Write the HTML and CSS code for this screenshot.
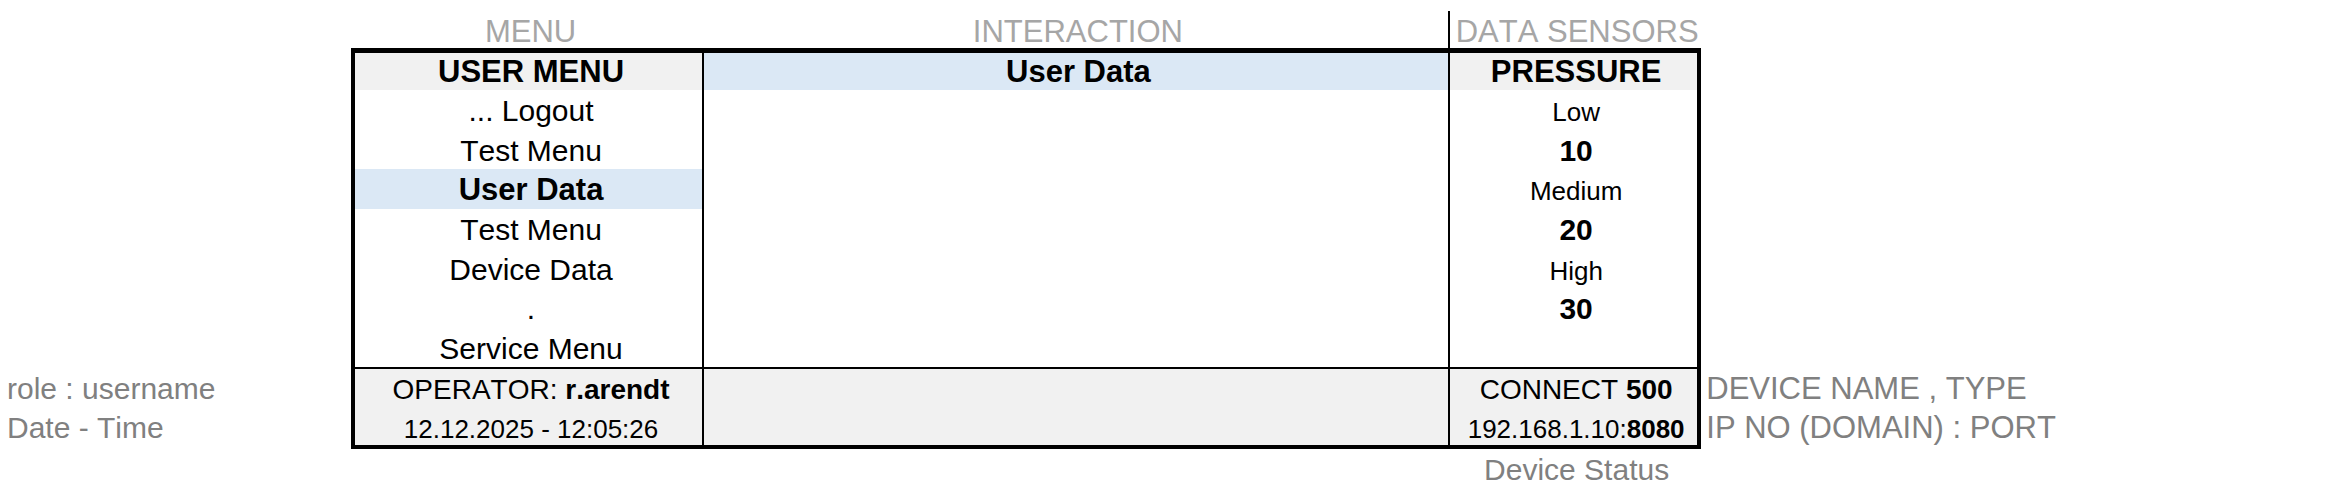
FILE: index.html
```html
<!DOCTYPE html>
<html lang="en">
<head>
<meta charset="utf-8">
<title>User Menu</title>
<link rel="stylesheet" href="styles.css">
</head>
<body>
<table class="screen">
  <colgroup>
    <col class="col-note">
    <col class="col-menu">
    <col class="col-main">
    <col class="col-sensor">
    <col>
  </colgroup>
  <tbody>
    <tr class="captions">
      <td></td>
      <th scope="col">MENU</th>
      <th scope="col">INTERACTION</th>
      <th scope="col" class="divided">DATA SENSORS</th>
      <td></td>
    </tr>
    <tr class="titles">
      <td></td>
      <th class="panel-left shaded">USER MENU</th>
      <th class="panel-mid active">User Data</th>
      <th class="panel-right shaded">PRESSURE</th>
      <td></td>
    </tr>
    <tr>
      <td></td>
      <td class="panel-left"><a href="#logout">... Logout</a></td>
      <td class="panel-mid" rowspan="7"></td>
      <td class="panel-right small">Low</td>
      <td></td>
    </tr>
    <tr>
      <td></td>
      <td class="panel-left"><a href="#test-1">Test Menu</a></td>
      <td class="panel-right value">10</td>
      <td></td>
    </tr>
    <tr>
      <td></td>
      <td class="panel-left active"><a href="#user-data" aria-current="page">User Data</a></td>
      <td class="panel-right small">Medium</td>
      <td></td>
    </tr>
    <tr>
      <td></td>
      <td class="panel-left"><a href="#test-2">Test Menu</a></td>
      <td class="panel-right value">20</td>
      <td></td>
    </tr>
    <tr>
      <td></td>
      <td class="panel-left"><a href="#device-data">Device Data</a></td>
      <td class="panel-right small">High</td>
      <td></td>
    </tr>
    <tr>
      <td></td>
      <td class="panel-left">.</td>
      <td class="panel-right value">30</td>
      <td></td>
    </tr>
    <tr>
      <td></td>
      <td class="panel-left"><a href="#service">Service Menu</a></td>
      <td class="panel-right"></td>
      <td></td>
    </tr>
    <tr class="status">
      <td class="note note-start">role : username</td>
      <td class="panel-left shaded medium">OPERATOR: <b>r.arendt</b></td>
      <td class="panel-mid shaded"></td>
      <td class="panel-right shaded medium">CONNECT <b>500</b></td>
      <td class="note note-end">DEVICE NAME , TYPE</td>
    </tr>
    <tr class="last">
      <td class="note note-start">Date - Time</td>
      <td class="panel-left shaded small">12.12.2025 - 12:05:26</td>
      <td class="panel-mid shaded"></td>
      <td class="panel-right shaded small">192.168.1.10:<b>8080</b></td>
      <td class="note note-end">IP NO (DOMAIN) : PORT</td>
    </tr>
    <tr>
      <td></td>
      <td></td>
      <td></td>
      <td class="footnote">Device Status</td>
      <td></td>
    </tr>
  </tbody>
</table>
</body>
</html>
```
FILE: styles.css
```css
body {
  margin: 11px 0 0;
  background: #fff;
  color: #000;
  font-family: "Liberation Sans", Arial, sans-serif;
  font-size: 30px;
  font-kerning: none;
  line-height: 35px;
}

.screen {
  width: 100%;
  table-layout: fixed;
  border-collapse: collapse;
}

.col-note { width: 15.1%; }
.col-menu { width: 14.95%; }
.col-main { width: 31.9%; }
.col-sensor { width: 10.7%; }

tr { height: 40px; }
tr:nth-child(3n + 1) { height: 39px; }

td,
th {
  padding: 3px 0 0 5px;
  text-align: center;
  vertical-align: baseline;
  white-space: nowrap;
}

th { font-size: 31px; }

a {
  color: inherit;
  text-decoration: none;
}

.captions th {
  padding-top: 5px;
  color: #a6a6a6;
  font-weight: normal;
  line-height: 31px;
}

.captions .divided { border-left: 2px solid #000; }

.titles th { padding-top: 1px; }

.titles .panel-left,
.titles .panel-mid,
.titles .panel-right { border-top: 5px solid #000; }

.panel-left {
  border-left: 4px solid #000;
  border-right: 2px solid #000;
}

.panel-right {
  border-left: 2px solid #000;
  border-right: 4px solid #000;
}

.status .panel-left,
.status .panel-mid,
.status .panel-right { border-top: 2px solid #000; }

.last .panel-left,
.last .panel-mid,
.last .panel-right { border-bottom: 4px solid #000; }

.shaded { background: #f1f1f1; }

.active {
  background: #dbe8f5;
  font-size: 31px;
  font-weight: bold;
}

.value { font-weight: bold; }

.medium {
  font-size: 28px;
  line-height: 33px;
}

.small {
  font-size: 26px;
  line-height: 30px;
}

.note {
  color: #808080;
  text-align: left;
}

.note-start { padding-left: 7px; }

.note-end { font-size: 31px; }

.footnote { color: #808080; }
```
